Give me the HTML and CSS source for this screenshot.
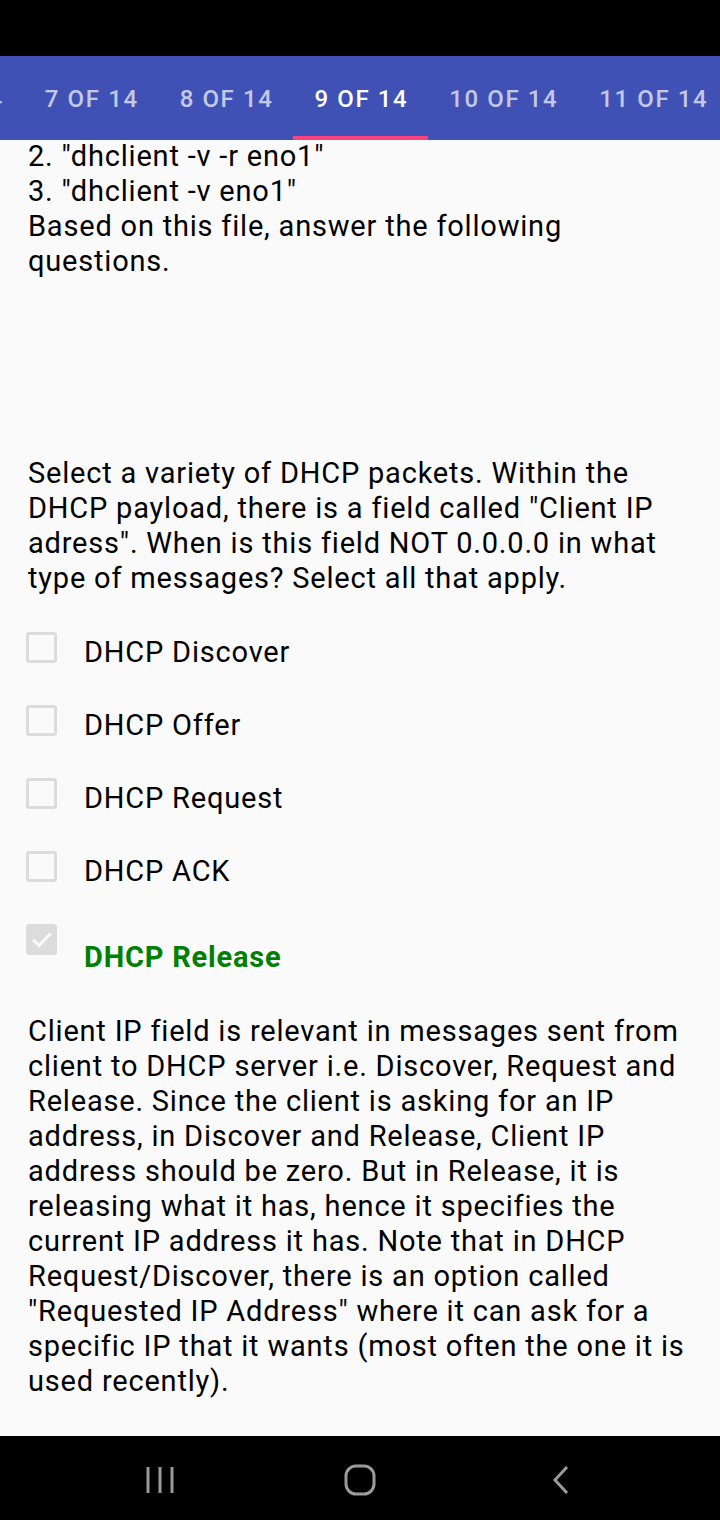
FILE: index.html
```html
<!DOCTYPE html>
<html>
<head>
<meta charset="utf-8">
<link rel="stylesheet" href="styles.css">
</head>
<body>
<div class="status"></div>
<div class="tabs">
  <div class="tab-row">
    <div class="tab">6 OF 14</div>
    <div class="tab">7 OF 14</div>
    <div class="tab">8 OF 14</div>
    <div class="tab active">9 OF 14</div>
    <div class="tab">10 OF 14</div>
    <div class="tab">11 OF 14</div>
  </div>
</div>
<main class="content">
  <p class="intro">2. "dhclient -v -r eno1"<br>3. "dhclient -v eno1"<br>Based on this file, answer the following questions.</p>
  <p class="question">Select a variety of DHCP packets. Within the DHCP payload, there is a field called "Client IP adress". When is this field NOT 0.0.0.0 in what type of messages? Select all that apply.</p>
  <ul class="options">
    <li class="option"><span class="box"></span><span class="label">DHCP Discover</span></li>
    <li class="option"><span class="box"></span><span class="label">DHCP Offer</span></li>
    <li class="option"><span class="box"></span><span class="label">DHCP Request</span></li>
    <li class="option"><span class="box"></span><span class="label">DHCP ACK</span></li>
    <li class="option correct"><span class="box checked"><svg viewBox="0 0 31 31" width="31" height="31"><path d="M7 15.5 L13 21.5 L24.5 9.5" fill="none" stroke="#fafafa" stroke-width="3"/></svg></span><span class="label">DHCP Release</span></li>
  </ul>
  <p class="explain">Client IP field is relevant in messages sent from client to DHCP server i.e. Discover, Request and Release. Since the client is asking for an IP address, in Discover and Release, Client IP address should be zero. But in Release, it is releasing what it has, hence it specifies the current IP address it has. Note that in DHCP Request/Discover, there is an option called "Requested IP Address" where it can ask for a specific IP that it wants (most often the one it is used recently).</p>
</main>
<nav class="navbar">
  <svg class="nav-recents" width="30" height="30" viewBox="0 0 30 30"><path d="M3 2 V28 M15 2 V28 M27 2 V28" stroke="#9a9a9a" stroke-width="3" fill="none"/></svg>
  <svg class="nav-home" width="32" height="32" viewBox="0 0 32 32"><rect x="2" y="2" width="28" height="28" rx="10" ry="10" stroke="#9a9a9a" stroke-width="3" fill="none"/></svg>
  <svg class="nav-back" width="20" height="30" viewBox="0 0 20 30"><path d="M16 2 L4 15 L16 28" stroke="#9a9a9a" stroke-width="3" fill="none"/></svg>
</nav>
</body>
</html>
```

FILE: styles.css
```css
* { box-sizing: border-box; }
html, body {
  margin: 0;
  padding: 0;
}
body {
  width: 720px;
  height: 1520px;
  background: #fafafa;
  font-family: Roboto, "Liberation Sans", sans-serif;
  color: #000;
  display: flex;
  flex-direction: column;
  overflow: hidden;
}
.status {
  height: 56px;
  background: #000;
  flex: none;
}
.tabs {
  height: 84px;
  background: #3f51b5;
  overflow: hidden;
  flex: none;
}
.tab-row {
  display: flex;
  height: 84px;
  margin-left: -111px;
}
.tab {
  flex: none;
  padding: 0 20px 0 21px;
  height: 84px;
  line-height: 86px;
  font-size: 24px;
  font-weight: 500;
  letter-spacing: 1.6px;
  color: rgba(255, 255, 255, 0.7);
  border-bottom: 4px solid transparent;
  white-space: nowrap;
}
.tab.active {
  color: #fff;
  border-bottom-color: #ff4081;
}
.content {
  flex: 1;
  overflow: hidden;
  padding: 0 28px;
  font-size: 29px;
  line-height: 35px;
  letter-spacing: 0.8px;
}
.intro {
  margin: -1px 0 0;
}
.question {
  margin: 177px 0 0;
}
.options {
  list-style: none;
  margin: 36px 0 0;
  padding: 0;
}
.option {
  display: flex;
  align-items: flex-start;
  height: 73px;
}
.box {
  width: 31px;
  height: 31px;
  border: 3px solid #dcdcdc;
  border-radius: 3px;
  margin-left: -2px;
  flex: none;
  display: flex;
}
.box.checked {
  background: #dcdcdc;
  border: none;
}
.label {
  margin-left: 27px;
  margin-top: 3px;
}
.option.correct {
  height: 88px;
}
.option.correct .label {
  color: #008000;
  font-weight: 700;
  margin-top: 16px;
}
.explain {
  margin: 2px 0 0;
}
.navbar {
  height: 84px;
  background: #000;
  flex: none;
  display: flex;
  align-items: center;
  padding: 4px 0 0 145px;
}
.nav-home {
  margin-left: 169px;
}
.nav-back {
  margin-left: 175px;
}
```
